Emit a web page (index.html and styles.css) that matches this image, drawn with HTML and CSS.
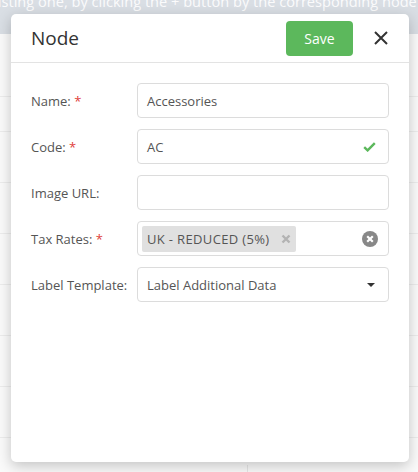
FILE: index.html
```html
<!DOCTYPE html>
<html>
<head>
<meta charset="utf-8">
<link rel="stylesheet" href="styles.css">
</head>
<body>
<div class="page">
  <div class="band"><span class="band-text">existing one, by clicking the + button by the corresponding node</span></div>
  <div class="rows">
    <div class="row r1"></div>
    <div class="row r2"></div>
    <div class="row"></div>
    <div class="row"></div>
    <div class="row"></div>
    <div class="row"></div>
    <div class="row"></div>
    <div class="row"></div>
    <div class="row last"><div class="vline"></div></div>
  </div>
</div>

<div class="modal">
  <div class="modal-header">
    <h1 class="title">Node</h1>
    <button class="btn-save">Save</button>
    <button class="btn-close" aria-label="Close">
      <svg width="14" height="14" viewBox="0 0 14 14"><path d="M1 1L13 13M13 1L1 13" stroke="#333" stroke-width="2" fill="none"/></svg>
    </button>
  </div>
  <div class="modal-body">
    <div class="field">
      <label class="label">Name: <span class="req">*</span></label>
      <div class="control"><span class="value">Accessories</span></div>
    </div>
    <div class="field">
      <label class="label">Code: <span class="req">*</span></label>
      <div class="control"><span class="value">AC</span>
        <svg class="check" width="13" height="10" viewBox="0 0 13 10"><path d="M1.2 5.2L4.6 8.4L11.8 1.2" stroke="#5cb85c" stroke-width="2.4" fill="none"/></svg>
      </div>
    </div>
    <div class="field">
      <label class="label">Image URL:</label>
      <div class="control"></div>
    </div>
    <div class="field">
      <label class="label">Tax Rates: <span class="req">*</span></label>
      <div class="control tags">
        <span class="tag"><span class="tag-text">UK - REDUCED (5%)</span>
          <svg class="tag-x" width="10" height="10" viewBox="0 0 10 10"><path d="M1.5 1.5L8.5 8.5M8.5 1.5L1.5 8.5" stroke="#b3b3b3" stroke-width="2.4" fill="none"/></svg>
        </span>
        <svg class="clear" width="16" height="16" viewBox="0 0 16 16"><circle cx="8" cy="8" r="8" fill="#888"/><path d="M5.2 5.2L10.8 10.8M10.8 5.2L5.2 10.8" stroke="#fff" stroke-width="2.2" fill="none"/></svg>
      </div>
    </div>
    <div class="field">
      <label class="label">Label Template:</label>
      <div class="control"><span class="value">Label Additional Data</span>
        <svg class="caret" width="8" height="4" viewBox="0 0 8 4"><path d="M0 0H8L4 4Z" fill="#333"/></svg>
      </div>
    </div>
  </div>
</div>
</body>
</html>
```

FILE: styles.css
```css
html, body {
  margin: 0;
  padding: 0;
}
body {
  width: 418px;
  height: 472px;
  overflow: hidden;
  position: relative;
  background: #fafafa;
  font-family: "Open Sans", "Liberation Sans", sans-serif;
}
.page {
  display: flex;
  flex-direction: column;
}
.band {
  height: 34px;
  background: #d9dee4;
  overflow: hidden;
  white-space: nowrap;
}
.band-text {
  display: block;
  margin-top: -11px;
  margin-left: -18px;
  font-size: 14.6px;
  line-height: 24px;
  color: #fbfbfc;
}
.rows {
  display: flex;
  flex-direction: column;
}
.row {
  height: 51px;
  border-bottom: 1px solid #ececec;
  box-sizing: border-box;
}
.row.r1 { height: 63px; }
.row.r2 { height: 35px; }
.row.last {
  border-bottom: none;
}
.vline {
  margin-left: 247px;
  margin-top: 27px;
  width: 1px;
  height: 20px;
  background: #e6e6e6;
}

.modal {
  position: absolute;
  left: 11px;
  top: 14px;
  width: 398px;
  height: 448px;
  background: #fff;
  border-radius: 5px;
  box-shadow: 0 4px 14px rgba(0, 0, 0, 0.22);
  display: flex;
  flex-direction: column;
}
.modal-header {
  height: 48px;
  border-bottom: 1px solid #e3e3e3;
  display: flex;
  align-items: center;
  padding: 0 21px 0 20px;
}
.title {
  margin: 0;
  flex: 1;
  font-size: 19px;
  font-weight: normal;
  color: #333;
  line-height: 24px;
}
.btn-save {
  width: 67px;
  height: 35px;
  border: none;
  border-radius: 4px;
  background: #5cb85c;
  color: #fff;
  font-family: "Open Sans", "Liberation Sans", sans-serif;
  font-size: 14px;
  font-weight: normal;
  padding: 0;
}
.btn-close {
  margin-left: 20px;
  width: 15px;
  height: 15px;
  padding: 0;
  border: none;
  background: none;
  display: flex;
  align-items: center;
  justify-content: center;
}
.modal-body {
  padding: 20px 20px 0 20px;
  display: flex;
  flex-direction: column;
  gap: 11px;
}
.field {
  display: flex;
  align-items: center;
}
.label {
  width: 106px;
  flex: none;
  font-size: 13px;
  color: #555;
}
.req {
  color: #e0403a;
}
.control {
  flex: 1;
  height: 35px;
  box-sizing: border-box;
  border: 1px solid #dcdcdc;
  border-radius: 4px;
  display: flex;
  align-items: center;
  padding: 0 12px 0 9px;
  font-size: 13px;
  color: #555;
}
.value {
  flex: 1;
}
.tags {
  padding: 0 10px 0 4px;
}
.tag {
  height: 26px;
  background: #e0e0e0;
  border-radius: 2px;
  display: flex;
  align-items: center;
  padding: 0 5px 0 5px;
  gap: 11px;
  color: #555;
}
.tag-text {
  letter-spacing: 0.35px;
}
.tag-x {
  display: block;
}
.clear {
  margin-left: auto;
}
.caret {
  margin-right: 1px;
}
```
